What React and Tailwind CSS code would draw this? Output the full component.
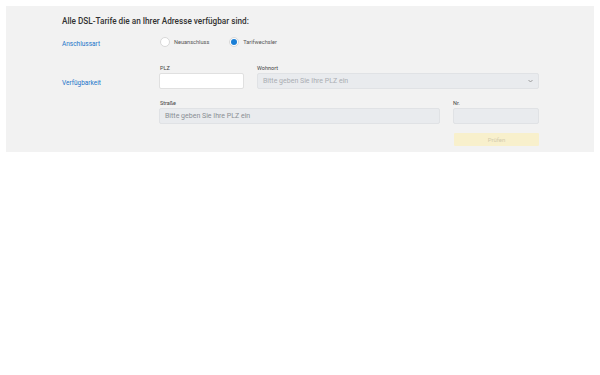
export default function App() {
  const font = { fontFamily: 'Roboto, "Noto Sans", sans-serif' };
  return (
    <div className="w-[600px] h-[375px] bg-white pt-[6px] px-[6px]" style={font}>
      <div className="bg-[#f2f2f2] h-[146px] pl-[56px] pt-[9px] pr-[55px]">
        <div className="text-[8.2px] leading-[12px] font-medium text-[#333]">
          Alle DSL-Tarife die an Ihrer Adresse verfügbar sind:
        </div>
        <div className="flex items-start mt-[10px] h-[14px]">
          <div className="w-[98px] text-[6.5px] text-[#1b74c9] mt-[3px]">Anschlussart</div>
          <div className="flex items-center gap-[4px]">
            <span className="w-[10px] h-[10px] rounded-full bg-white border border-[#d8d8d8]"></span>
            <span className="text-[5.6px] text-[#555]">Neuanschluss</span>
          </div>
          <div className="flex items-center gap-[4px] ml-[20px]">
            <span className="w-[10px] h-[10px] rounded-full bg-white border border-[#d8d8d8] flex items-center justify-center">
              <span className="w-[6px] h-[6px] rounded-full bg-[#1b7fd6]"></span>
            </span>
            <span className="text-[5.6px] text-[#555]">Tarifwechsler</span>
          </div>
        </div>
        <div className="flex mt-[14px]">
          <div className="w-[97px] text-[6.5px] text-[#1b74c9] pt-[14px]">Verfügbarkeit</div>
          <div className="flex-1">
            <div className="flex gap-[13px]">
              <div className="w-[85px]">
                <div className="text-[5.5px] text-[#444] h-[6px] leading-[6px] pl-[1px]">PLZ</div>
                <div className="mt-[2px] h-[16px] bg-white border border-[#e0e0e0] rounded-[2px]"></div>
              </div>
              <div className="flex-1">
                <div className="text-[5.5px] text-[#444] h-[6px] leading-[6px]">Wohnort</div>
                <div className="mt-[2px] h-[16px] bg-[#e9ebee] border border-[#e0e2e5] rounded-[2px] flex items-center justify-between px-[5px]">
                  <span className="text-[7px] text-[#a9adb2]">Bitte geben Sie Ihre PLZ ein</span>
                  <svg width="5" height="4" viewBox="0 0 5 4" fill="none">
                    <path d="M0.5 1l2 2 2-2" stroke="#888" strokeWidth="0.8" />
                  </svg>
                </div>
              </div>
            </div>
            <div className="flex gap-[13px] mt-[11px]">
              <div className="w-[281px]">
                <div className="text-[5.5px] text-[#444] h-[6px] leading-[6px] pl-[1px]">Straße</div>
                <div className="mt-[2px] h-[16px] bg-[#e9ebee] border border-[#e0e2e5] rounded-[2px] flex items-center px-[5px]">
                  <span className="text-[7px] text-[#8a8e93]">Bitte geben Sie Ihre PLZ ein</span>
                </div>
              </div>
              <div className="flex-1">
                <div className="text-[5.5px] text-[#444] h-[6px] leading-[6px]">Nr.</div>
                <div className="mt-[2px] h-[16px] bg-[#e9ebee] border border-[#e0e2e5] rounded-[2px]"></div>
              </div>
            </div>
            <div className="flex justify-end mt-[9px]">
              <div className="w-[85px] h-[13px] bg-[#f8f0cc] rounded-[1px] flex items-center justify-center text-[6px] text-[#d3cbac]">
                Prüfen
              </div>
            </div>
          </div>
        </div>
      </div>
    </div>
  );
}
